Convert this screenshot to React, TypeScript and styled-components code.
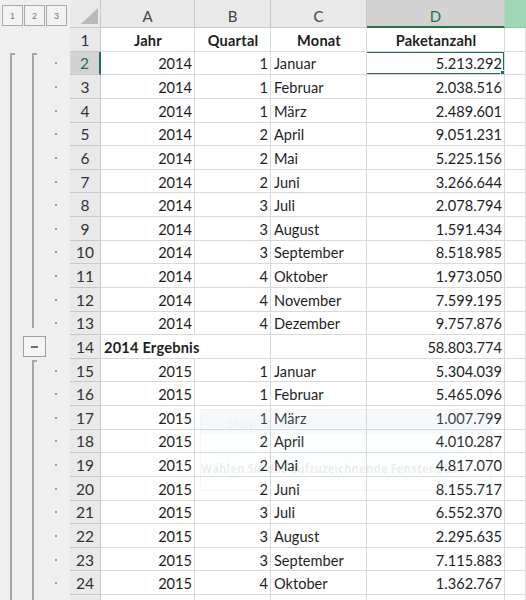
import React from 'react';
import styled, { createGlobalStyle } from 'styled-components';

const GlobalStyle = createGlobalStyle`
    html, body {
        margin: 0;
        padding: 0;
        background: #ffffff;
        overflow: hidden;
    }
    body {
        font-family: Lato, "Open Sans", "Liberation Sans", sans-serif;
        color: #222;
    }
`;

const ROW_H = 23.64;
const HEAD_H = 28;
const LINE = '#a6a6a6';
const GRID = '#d9d9d9';
const HEAD_BORDER = '#c8c8c8';
const GREEN = '#217346';

const Sheet = styled.div`
    position: relative;
    width: 526px;
    height: 600px;
    overflow: hidden;
    display: flex;
    flex-direction: column;
`;

const Row = styled.div<{ $h: number }>`
    display: flex;
    height: ${(p) => p.$h}px;
    flex-shrink: 0;
`;

/* ---- outline panel ---- */

const OutlineHead = styled.div`
    width: 70px;
    flex-shrink: 0;
    background: #efefef;
    display: flex;
    gap: 1px;
    padding: 5px 0 0 2px;
    box-sizing: border-box;
`;

const LevelButton = styled.div`
    width: 21px;
    height: 21px;
    box-sizing: border-box;
    border: 1px solid #a9a9a9;
    background: #f2f2f2;
    font-family: "Liberation Sans", sans-serif;
    font-size: 9px;
    color: #777;
    display: flex;
    align-items: center;
    justify-content: center;
`;

const OutlineCell = styled.div`
    width: 70px;
    flex-shrink: 0;
    background: #efefef;
    display: flex;
`;

const Lane = styled.div<{ $w: number }>`
    width: ${(p) => p.$w}px;
    flex-shrink: 0;
    display: flex;
    flex-direction: column;
`;

const Stroke = styled.div<{ $x: number; $start?: boolean; $end?: boolean }>`
    flex: 1;
    margin-left: ${(p) => p.$x}px;
    margin-top: ${(p) => (p.$start ? 1 : 0)}px;
    margin-bottom: ${(p) => (p.$end ? 7 : 0)}px;
    width: 3px;
    border-left: 2px solid ${LINE};
    border-top: ${(p) => (p.$start ? `2px solid ${LINE}` : 'none')};
`;

const Dot = styled.div`
    width: 2px;
    height: 2px;
    margin: auto 0 auto 9px;
    background: #9a9a9a;
`;

const MinusButton = styled.div`
    width: 23px;
    height: 21px;
    margin: auto 0 auto 1px;
    box-sizing: border-box;
    border: 1px solid #a0a0a0;
    background: #f4f4f4;
    display: flex;
    align-items: center;
    justify-content: center;

    &::after {
        content: '';
        width: 7px;
        height: 2px;
        background: #6f6f6f;
    }
`;

/* ---- headers ---- */

const Corner = styled.div`
    width: 31px;
    flex-shrink: 0;
    background: #e9e9e9;
    border-right: 1px solid ${HEAD_BORDER};
    border-bottom: 1px solid ${HEAD_BORDER};
    box-sizing: border-box;
    display: flex;
    align-items: flex-end;
    justify-content: flex-end;
    padding: 0 2px 3px 0;
`;

const ColHead = styled.div<{ $w?: number; $sel?: boolean }>`
    ${(p) => (p.$w ? `width: ${p.$w}px; flex-shrink: 0;` : 'flex: 1;')}
    box-sizing: border-box;
    background: ${(p) => (p.$sel ? '#d3d3d3' : '#e9e9e9')};
    color: ${(p) => (p.$sel ? GREEN : '#444')};
    border-right: 1px solid ${HEAD_BORDER};
    border-bottom: ${(p) => (p.$sel ? `2px solid ${GREEN}` : `1px solid ${HEAD_BORDER}`)};
    font-size: 15px;
    display: flex;
    align-items: center;
    justify-content: center;
    padding-top: 5px;
`;

const GreenHead = styled.div`
    flex: 1;
    background: #9fd6b5;
    border-bottom: 1px solid #8cc9a5;
`;

const RowHead = styled.div<{ $sel?: boolean }>`
    width: 31px;
    flex-shrink: 0;
    box-sizing: border-box;
    background: ${(p) => (p.$sel ? '#d3d3d3' : '#e9e9e9')};
    color: ${(p) => (p.$sel ? GREEN : '#333')};
    border-right: ${(p) => (p.$sel ? `2px solid ${GREEN}` : `1px solid ${HEAD_BORDER}`)};
    border-bottom: 1px solid ${HEAD_BORDER};
    font-size: 15.5px;
    display: flex;
    align-items: center;
    justify-content: center;
    padding-top: 1px;
`;

/* ---- cells ---- */

type Align = 'left' | 'right' | 'center';

const Cell = styled.div<{ $w?: number; $align?: Align; $bold?: boolean; $spill?: boolean }>`
    position: relative;
    ${(p) => (p.$w ? `width: ${p.$w}px; flex-shrink: 0;` : 'flex: 1;')}
    box-sizing: border-box;
    border-right: ${(p) => (p.$spill ? 'none' : `1px solid ${GRID}`)};
    border-bottom: 1px solid ${GRID};
    font-size: 14.6px;
    font-weight: ${(p) => (p.$bold ? 700 : 400)};
    letter-spacing: ${(p) => (p.$bold ? '0.2px' : '0')};
    color: #1e1e1e;
    white-space: nowrap;
    overflow: ${(p) => (p.$spill ? 'visible' : 'hidden')};
    z-index: ${(p) => (p.$spill ? 1 : 0)};
    display: flex;
    align-items: center;
    justify-content: ${(p) =>
        p.$align === 'right' ? 'flex-end' : p.$align === 'center' ? 'center' : 'flex-start'};
    padding: 2px 2px 0 3px;
`;

const Selection = styled.div`
    position: absolute;
    inset: -1px -1px -1px -2px;
    border: 2px solid ${GREEN};
    pointer-events: none;

    &::after {
        content: '';
        position: absolute;
        right: -4px;
        bottom: -4px;
        width: 5px;
        height: 5px;
        background: ${GREEN};
        border: 1px solid #fff;
    }
`;

/* ---- faint snipping tool ghost ---- */

const Ghost = styled.div`
    position: absolute;
    left: 200px;
    top: 409px;
    width: 290px;
    height: 80px;
    border: 1px solid rgba(120, 140, 160, 0.08);
    background: rgba(225, 235, 245, 0.06);
    pointer-events: none;
    font-family: "Open Sans", sans-serif;
    white-space: nowrap;
`;

const GhostTitle = styled.div`
    height: 24px;
    background: rgba(190, 215, 235, 0.12);
    color: rgba(80, 90, 100, 0.09);
    font-size: 11px;
    display: flex;
    align-items: center;
    padding-left: 26px;
`;

const GhostText = styled.div`
    margin-top: 27px;
    color: rgba(60, 70, 80, 0.1);
    font-size: 11.5px;
    font-weight: 700;
`;

const CornerTriangle = () => (
    <svg width="17" height="16" viewBox="0 0 17 16">
        <polygon points="17,0 17,16 0,16" fill="#b8b8b8" />
    </svg>
);

type Outline = 'none' | 'start1' | 'line' | 'end2' | 'button' | 'start2only';

interface DataRow {
    n: number;
    label?: boolean;
    jahr?: string;
    quartal?: string;
    monat?: string;
    wert?: string;
    bold?: boolean;
    header?: boolean;
    outline: Outline;
}

const months2014: [string, string, string][] = [
    ['1', 'Januar', '5.213.292'],
    ['1', 'Februar', '2.038.516'],
    ['1', 'März', '2.489.601'],
    ['2', 'April', '9.051.231'],
    ['2', 'Mai', '5.225.156'],
    ['2', 'Juni', '3.266.644'],
    ['3', 'Juli', '2.078.794'],
    ['3', 'August', '1.591.434'],
    ['3', 'September', '8.518.985'],
    ['4', 'Oktober', '1.973.050'],
    ['4', 'November', '7.599.195'],
    ['4', 'Dezember', '9.757.876'],
];

const months2015: [string, string, string][] = [
    ['1', 'Januar', '5.304.039'],
    ['1', 'Februar', '5.465.096'],
    ['1', 'März', '1.007.799'],
    ['2', 'April', '4.010.287'],
    ['2', 'Mai', '4.817.070'],
    ['2', 'Juni', '8.155.717'],
    ['3', 'Juli', '6.552.370'],
    ['3', 'August', '2.295.635'],
    ['3', 'September', '7.115.883'],
    ['4', 'Oktober', '1.362.767'],
];

const rows: DataRow[] = [
    { n: 1, jahr: 'Jahr', quartal: 'Quartal', monat: 'Monat', wert: 'Paketanzahl', header: true, outline: 'none' },
    ...months2014.map(([q, m, w], i) => ({
        n: i + 2,
        jahr: '2014',
        quartal: q,
        monat: m,
        wert: w,
        outline: (i === 0 ? 'start1' : i === 11 ? 'end2' : 'line') as Outline,
    })),
    { n: 14, jahr: '2014 Ergebnis', wert: '58.803.774', bold: true, outline: 'button' },
    ...months2015.map(([q, m, w], i) => ({
        n: i + 15,
        jahr: '2015',
        quartal: q,
        monat: m,
        wert: w,
        outline: (i === 0 ? 'start2only' : 'line') as Outline,
    })),
];

const OutlineLanes: React.FC<{ kind: Outline }> = ({ kind }) => {
    if (kind === 'none') return <OutlineCell />;
    const dot = kind !== 'button';
    return (
        <OutlineCell>
            <Lane $w={22}>
                <Stroke $x={10} $start={kind === 'start1'} />
            </Lane>
            <Lane $w={24}>
                {kind === 'button' ? (
                    <MinusButton />
                ) : (
                    <Stroke
                        $x={10}
                        $start={kind === 'start1' || kind === 'start2only'}
                        $end={kind === 'end2'}
                    />
                )}
            </Lane>
            <Lane $w={24}>{dot && <Dot />}</Lane>
        </OutlineCell>
    );
};

const W = { A: 94, B: 76, C: 96, D: 138 };

export default function App() {
    return (
        <>
            <GlobalStyle />
            <Sheet>
                <Row $h={HEAD_H}>
                    <OutlineHead>
                        <LevelButton>1</LevelButton>
                        <LevelButton>2</LevelButton>
                        <LevelButton>3</LevelButton>
                    </OutlineHead>
                    <Corner>
                        <CornerTriangle />
                    </Corner>
                    <ColHead $w={W.A}>A</ColHead>
                    <ColHead $w={W.B}>B</ColHead>
                    <ColHead $w={W.C}>C</ColHead>
                    <ColHead $w={W.D} $sel>
                        D
                    </ColHead>
                    <GreenHead />
                </Row>
                {rows.map((r) => (
                    <Row key={r.n} $h={ROW_H}>
                        <OutlineLanes kind={r.outline} />
                        <RowHead $sel={r.n === 2}>{r.n}</RowHead>
                        <Cell
                            $w={W.A}
                            $align={r.header ? 'center' : r.bold ? 'left' : 'right'}
                            $bold={r.header || r.bold}
                            $spill={r.bold}
                        >
                            {r.jahr}
                        </Cell>
                        <Cell $w={W.B} $align={r.header ? 'center' : 'right'} $bold={r.header}>
                            {r.quartal}
                        </Cell>
                        <Cell $w={W.C} $align={r.header ? 'center' : 'left'} $bold={r.header}>
                            {r.monat}
                        </Cell>
                        <Cell $w={W.D} $align={r.header ? 'center' : 'right'} $bold={r.header}>
                            {r.wert}
                            {r.n === 2 && <Selection />}
                        </Cell>
                        <Cell />
                    </Row>
                ))}
                <Row $h={ROW_H}>
                    <OutlineLanes kind="line" />
                    <RowHead />
                    <Cell $w={W.A} />
                    <Cell $w={W.B} />
                    <Cell $w={W.C} />
                    <Cell $w={W.D} />
                    <Cell />
                </Row>
                <Ghost>
                    <GhostTitle>Snipping Tool</GhostTitle>
                    <GhostText>Wählen Sie das aufzuzeichnende Fenster aus:</GhostText>
                </Ghost>
            </Sheet>
        </>
    );
}
